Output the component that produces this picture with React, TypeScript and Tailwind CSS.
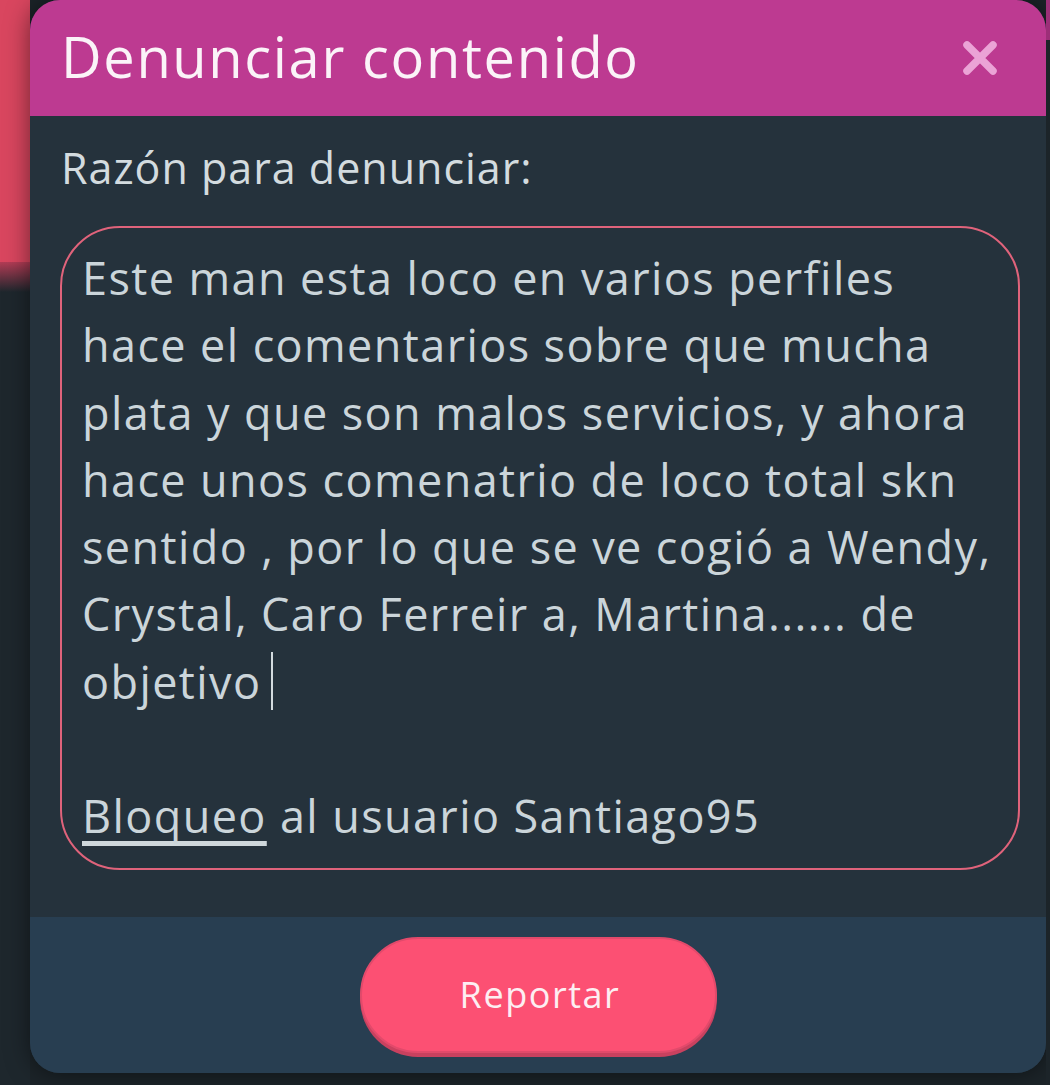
import React from "react";

const lines = [
  "Este man esta loco en varios perfiles",
  "hace el comentarios sobre que mucha",
  "plata y que son malos servicios, y ahora",
  "hace unos comenatrio de loco total skn",
  "sentido , por lo que se ve cogió a Wendy,",
  "Crystal, Caro Ferreir a, Martina...... de",
];

export default function App() {
  return (
    <div
      className="flex w-[1050px] h-[1085px] overflow-hidden bg-[#1c2429]"
      style={{ fontFamily: "'Open Sans', 'Noto Sans', sans-serif" }}
    >
      {/* left background strip */}
      <div className="flex flex-col w-[30px] shrink-0">
        <div className="h-[262px] bg-[#d9465f]" />
        <div className="h-[30px] bg-[linear-gradient(to_bottom,#b33c55,#1e272d)]" />
        <div className="flex-1 bg-[#1e272d]" />
      </div>

      {/* modal column */}
      <div className="flex flex-col w-[1016px] shrink-0">
        <div className="flex flex-col h-[1073px] rounded-[30px] overflow-hidden bg-[#25323c] shadow-[0_0_24px_rgba(0,0,0,0.5)]">
          {/* header */}
          <div className="flex items-center justify-between h-[116px] shrink-0 bg-[#bd3a91] pl-[31px] pr-[46px] pb-[3px]">
            <div className="text-[56px] leading-[67px] tracking-[1.65px] font-[370] text-[#fbf3f8] whitespace-nowrap">
              Denunciar contenido
            </div>
            <svg width="40" height="40" viewBox="0 0 40 40" className="mt-[3px]">
              <path
                d="M7 7 L33 33 M33 7 L7 33"
                stroke="#eba3d6"
                strokeWidth="7.5"
                strokeLinecap="round"
              />
            </svg>
          </div>

          {/* body */}
          <div className="flex flex-col flex-1 pt-[26px] pl-[30px] pr-[26px] pb-[47px]">
            <div className="pl-[1px] text-[43px] leading-[52px] tracking-[1px] font-[370] text-[#d3dbdf] whitespace-nowrap">
              Razón para denunciar:
            </div>
            <div className="mt-[32px] h-[644px] rounded-[60px] border-2 border-[#e0637b] pt-[16px] pl-[20px] text-[45px] leading-[67.3px] tracking-[1.4px] font-[370] text-[#cbd5da] whitespace-nowrap">
              {lines.map((l) => (
                <div key={l}>{l}</div>
              ))}
              <div className="flex items-center">
                <span>objetivo</span>
                <span className="ml-[10px] w-[2px] h-[58px] bg-[#d3dbdf]" />
              </div>
              <div>&nbsp;</div>
              <div>
                <span className="underline decoration-[5px] underline-offset-[8px] decoration-[#cfd8dc] [text-decoration-skip-ink:none]">
                  Bloqueo
                </span>{" "}
                al usuario Santiago95
              </div>
            </div>
          </div>

          {/* footer */}
          <div className="flex justify-center h-[156px] shrink-0 bg-[#283e51] pt-[20px]">
            <button className="flex items-center justify-center w-[357px] h-[116px] rounded-full bg-[#fc5073] border-2 border-[#e24a6b] shadow-[0_4px_0_#c9415f] pl-[4px] text-[36px] tracking-[1.55px] font-[370] text-[#fdeef2]">
              Reportar
            </button>
          </div>
        </div>
        <div className="flex-1" />
      </div>
      <div className="flex flex-col flex-1">
        <div className="h-[40px] bg-[#9c2f78]" />
        <div className="flex-1 bg-[#1c2429]" />
      </div>
    </div>
  );
}
